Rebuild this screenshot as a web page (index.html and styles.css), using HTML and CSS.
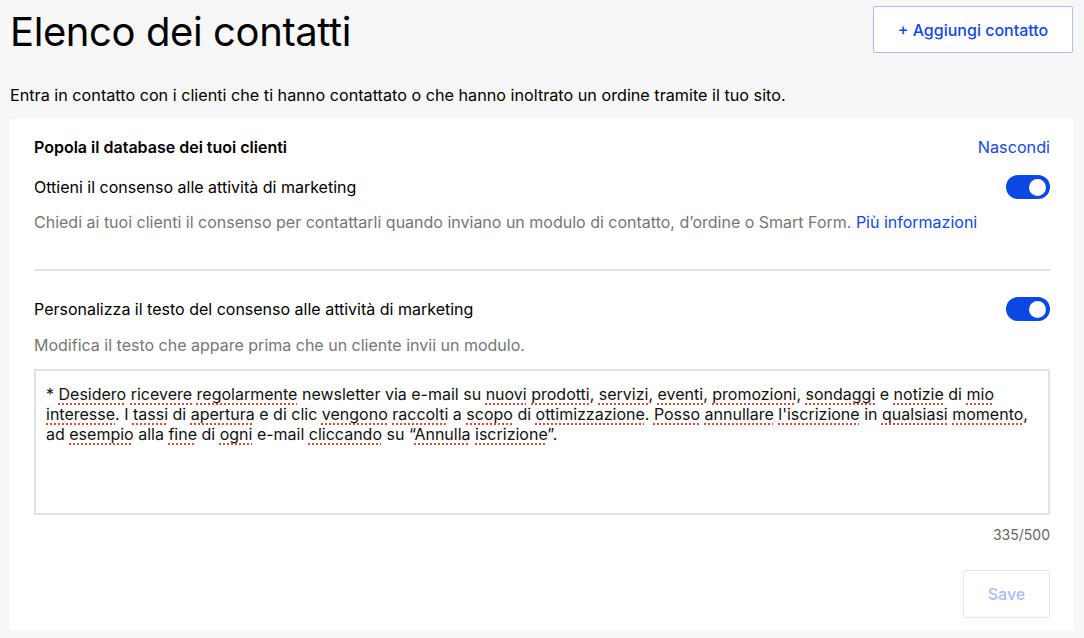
FILE: index.html
```html
<!DOCTYPE html>
<html lang="it">
<head>
<meta charset="utf-8">
<link rel="stylesheet" href="styles.css">
</head>
<body>
<div class="page">
  <header class="head">
    <h1 class="title">Elenco dei contatti</h1>
    <button class="btn-add">+ Aggiungi contatto</button>
  </header>
  <p class="intro">Entra in contatto con i clienti che ti hanno contattato o che hanno inoltrato un ordine tramite il tuo sito.</p>
  <section class="card">
    <div class="row row-head">
      <span class="card-title">Popola il database dei tuoi clienti</span>
      <a class="link">Nascondi</a>
    </div>
    <div class="row row-opt">
      <span class="opt-label">Ottieni il consenso alle attività di marketing</span>
      <span class="toggle"><span class="knob"></span></span>
    </div>
    <p class="desc desc-first">Chiedi ai tuoi clienti il consenso per contattarli quando inviano un modulo di contatto, d’ordine o Smart Form. <a class="link">Più informazioni</a></p>
    <hr class="divider">
    <div class="row row-opt row-opt2">
      <span class="opt-label">Personalizza il testo del consenso alle attività di marketing</span>
      <span class="toggle"><span class="knob"></span></span>
    </div>
    <p class="desc">Modifica il testo che appare prima che un cliente invii un modulo.</p>
    <div class="textbox">* <span class="sp">Desidero</span> <span class="sp">ricevere</span> <span class="sp">regolarmente</span> newsletter via e-mail su <span class="sp">nuovi</span> <span class="sp">prodotti</span>, <span class="sp">servizi</span>, <span class="sp">eventi</span>, <span class="sp">promozioni</span>, <span class="sp">sondaggi</span> e <span class="sp">notizie</span> di <span class="sp">mio</span> <span class="sp">interesse</span>. I <span class="sp">tassi</span> di <span class="sp">apertura</span> e di clic <span class="sp">vengono</span> <span class="sp">raccolti</span> a <span class="sp">scopo</span> di <span class="sp">ottimizzazione</span>. <span class="sp">Posso</span> <span class="sp">annullare</span> <span class="sp">l'iscrizione</span> in <span class="sp">qualsiasi</span> <span class="sp">momento</span>,<br>ad <span class="sp">esempio</span> alla <span class="sp">fine</span> di <span class="sp">ogni</span> e-mail <span class="sp">cliccando</span> su “<span class="sp">Annulla</span> <span class="sp">iscrizione</span>”.</div>
    <div class="counter">335/500</div>
    <div class="actions"><button class="btn-save">Save</button></div>
  </section>
</div>
</body>
</html>
```
FILE: styles.css
```css
* { box-sizing: border-box; }
html, body { margin: 0; padding: 0; background: #f7f7f7; }
body { font-family: "Inter", "Liberation Sans", sans-serif; color: #000; }
.page { padding: 6px 10px 0 10px; }
.head { display: flex; justify-content: space-between; align-items: flex-start; height: 62px; }
.title { margin: 2px 0 0 0; font-size: 40px; font-weight: 400; letter-spacing: -0.4px; line-height: 48px; }
.btn-add { margin-right: 1px; width: 200px; height: 47px; background: #fff; border: 1px solid #a9bdfd; border-radius: 2px; color: #1248e6; font-family: inherit; font-size: 16px; font-weight: 500; }
.intro { margin: 17px 0 14px 0; font-size: 16.2px; line-height: 20px; }
.card { background: #fff; padding: 17px 24px 12px 24px; }
.row { display: flex; justify-content: space-between; align-items: center; }
.row-head { height: 22px; }
.card-title { font-size: 16px; font-weight: 600; }
.link { color: #1248e6; text-decoration: none; }
.row-head .link { font-size: 16.2px; }
.row-opt { margin-top: 16px; height: 26px; }
.opt-label { font-size: 16px; }
.toggle { width: 44px; height: 24px; background: #0b47e5; border-radius: 12px; display: flex; align-items: center; justify-content: flex-end; padding-right: 4px; }
.knob { width: 17px; height: 17px; border-radius: 50%; background: #fff; }
.desc { margin: 13px 0 0 0; font-size: 16px; line-height: 20px; color: #767676; }
.desc-first { margin-top: 12px; }
.desc .link { color: #1248e6; }
.divider { margin: 37px 0 0 0; border: 0; border-top: 2px solid #e3e3e3; }
.row-opt2 { margin-top: 25px; }
.textbox { margin-top: 14px; height: 146px; border: 2px solid #e3e3e3; padding: 13px 10px; font-size: 16px; line-height: 20px; color: #111; }
.sp { text-decoration: underline dotted #e8453c; text-decoration-thickness: 2px; text-underline-offset: 3px; }
.counter { margin-top: 11px; text-align: right; font-size: 14px; color: #666; line-height: 18px; }
.actions { display: flex; justify-content: flex-end; margin-top: 26px; }
.btn-save { width: 87px; height: 48px; background: #fff; border: 1px solid #e1e8fc; border-radius: 2px; color: #a9bdfd; font-family: inherit; font-size: 16px; font-weight: 500; }
```
